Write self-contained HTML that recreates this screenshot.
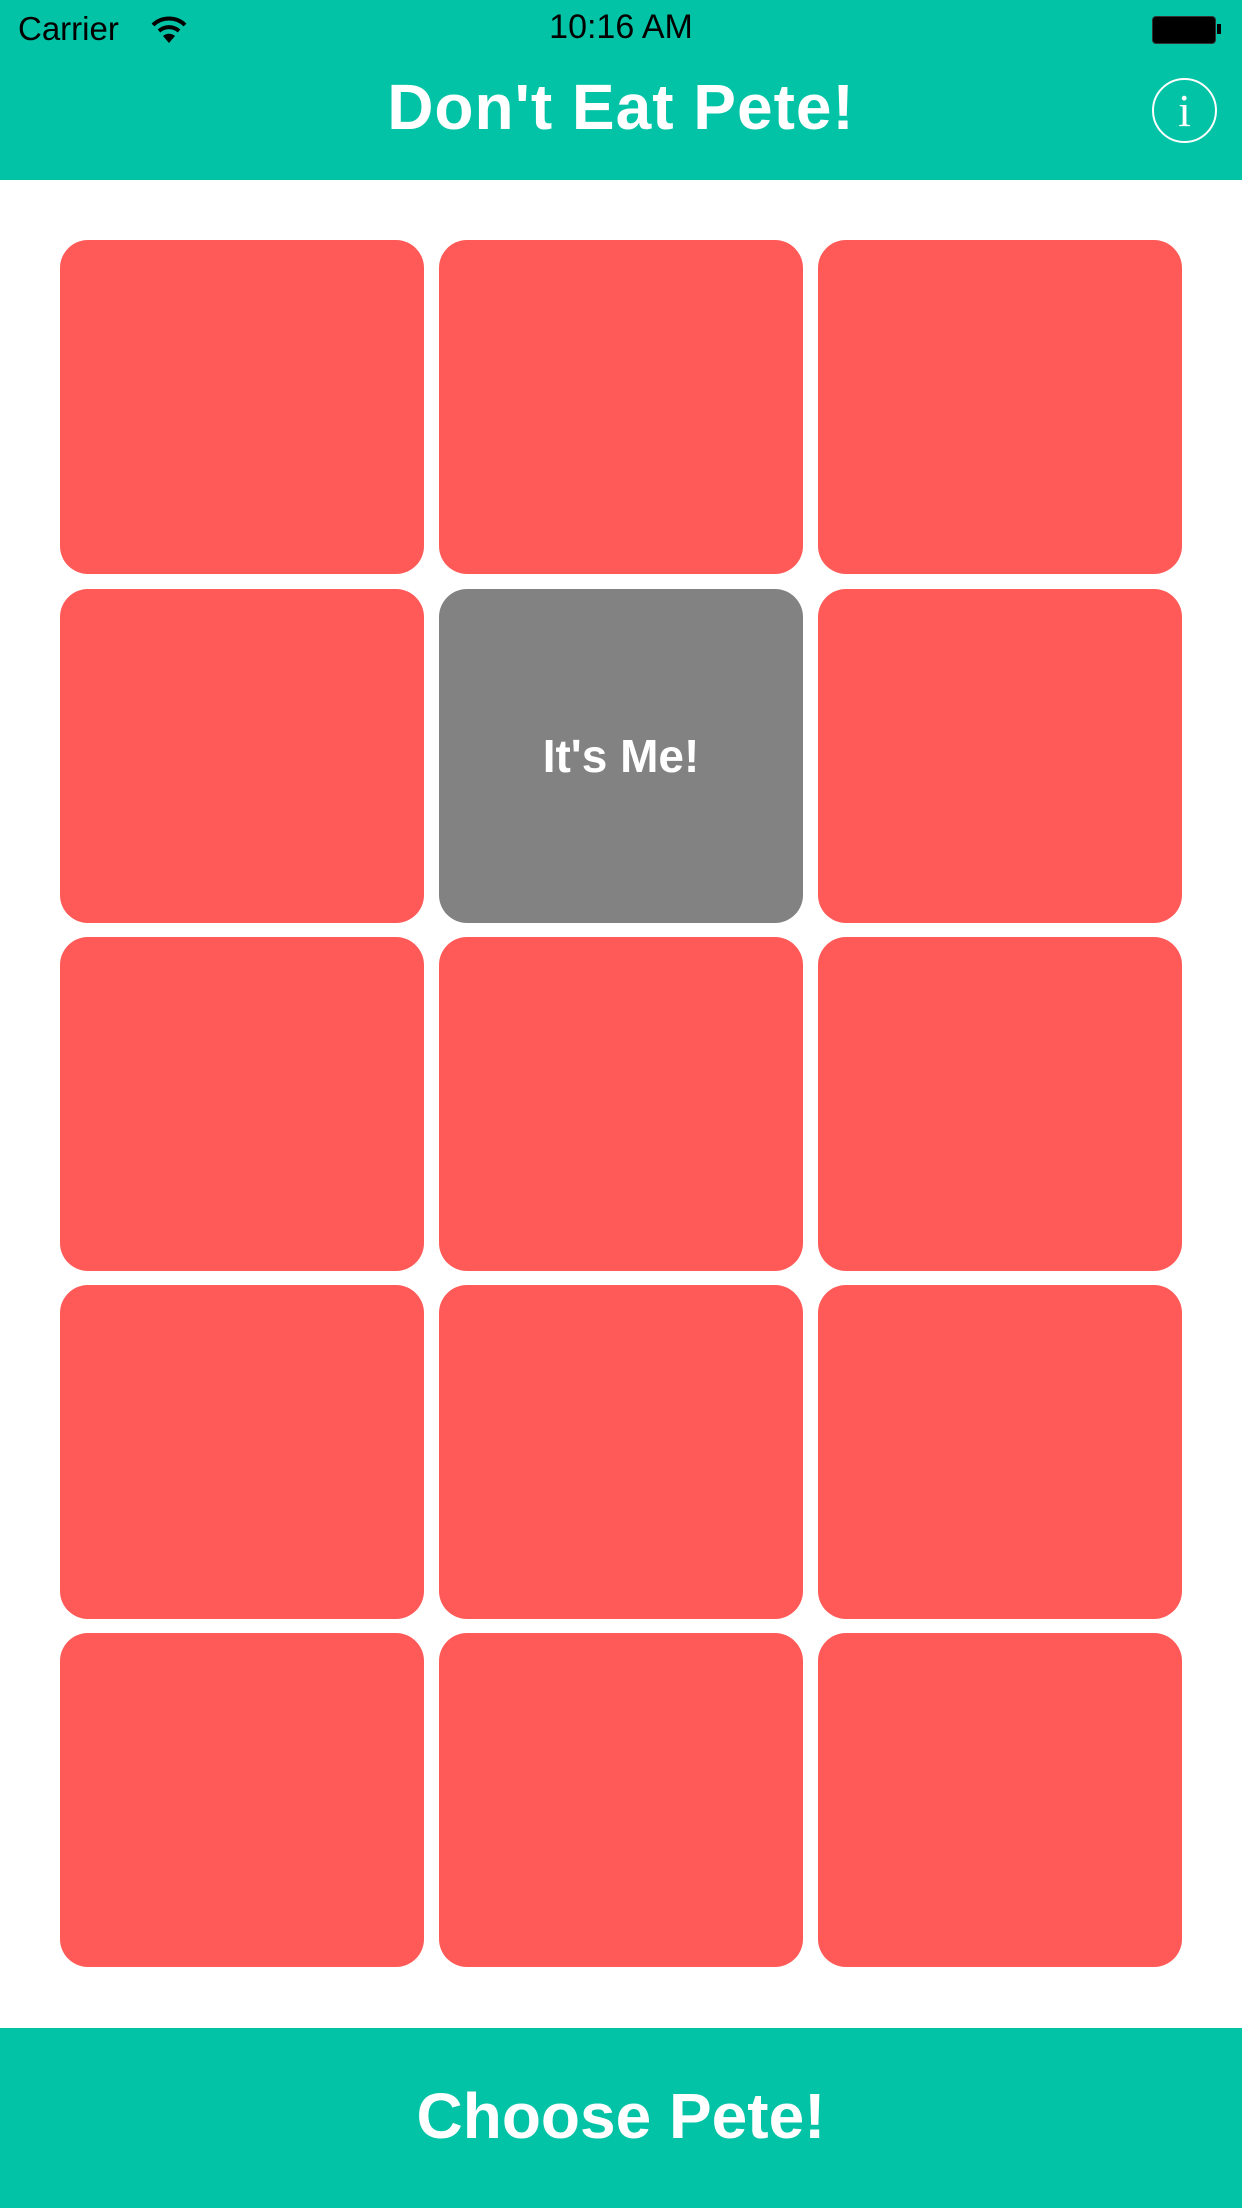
<!DOCTYPE html>
<html><head><meta charset="utf-8"><style>
body{margin:0;width:1242px;height:2208px;position:relative;background:#fff;font-family:"Liberation Sans",sans-serif;overflow:hidden}
.hdr{position:absolute;left:0;top:0;width:1242px;height:180px;background:#03c3a6}
.ft{position:absolute;left:0;top:2028px;width:1242px;height:180px;background:#03c3a6;color:#fff;font-weight:bold;font-size:64px;text-align:center;line-height:176px}
.t{position:absolute;width:364px;height:334px;border-radius:28px;background:#ff5a57}
.g{background:#828282;color:#fff;font-weight:bold;font-size:46px;text-align:center;line-height:334px}
</style></head><body>
<div class="hdr">
<div style="position:absolute;left:18px;top:10px;font-size:33px;color:#000">Carrier</div>
<svg style="position:absolute;left:150px;top:14px" width="38" height="30" viewBox="0 0 38 30"><path d="M3 11 A23 23 0 0 1 35 11" stroke="#000" stroke-width="4" fill="none"/><path d="M9 17 A15 15 0 0 1 29 17" stroke="#000" stroke-width="4" fill="none"/><path d="M19 29 L13 22 A9 9 0 0 1 25 22 Z" fill="#000"/></svg>
<div style="position:absolute;left:0;width:1242px;top:8px;text-align:center;font-size:34px;color:#000;font-weight:500">10:16 AM</div>
<div style="position:absolute;left:1152px;top:16px;width:62px;height:26px;background:#000;border-radius:4px;border:1px solid #333"></div>
<div style="position:absolute;left:1217px;top:24px;width:4px;height:10px;background:#000"></div>
<div style="position:absolute;left:0;width:1242px;top:70px;text-align:center;font-size:64px;font-weight:bold;color:#fff;letter-spacing:1px">Don't Eat Pete!</div>
<div style="position:absolute;left:1152px;top:78px;width:61px;height:61px;border:2px solid #fff;border-radius:50%;color:#fff;font-family:'Liberation Serif',serif;font-size:46px;text-align:center;line-height:61px">i</div>
</div>
<div class="t" style="left:60px;top:240px"></div><div class="t" style="left:439px;top:240px"></div><div class="t" style="left:818px;top:240px"></div>
<div class="t" style="left:60px;top:589px"></div><div class="t g" style="left:439px;top:589px">It's Me!</div><div class="t" style="left:818px;top:589px"></div>
<div class="t" style="left:60px;top:937px"></div><div class="t" style="left:439px;top:937px"></div><div class="t" style="left:818px;top:937px"></div>
<div class="t" style="left:60px;top:1285px"></div><div class="t" style="left:439px;top:1285px"></div><div class="t" style="left:818px;top:1285px"></div>
<div class="t" style="left:60px;top:1633px"></div><div class="t" style="left:439px;top:1633px"></div><div class="t" style="left:818px;top:1633px"></div>
<div class="ft">Choose Pete!</div>
</body></html>
